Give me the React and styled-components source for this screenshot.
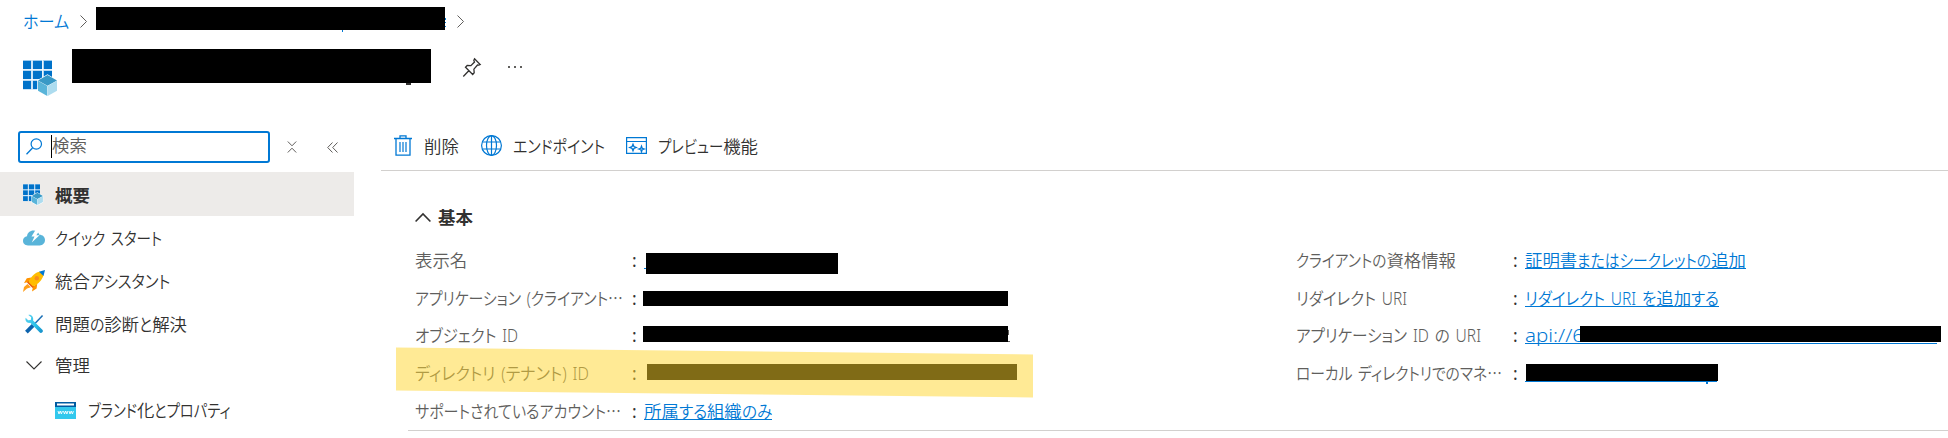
import React, { useLayoutEffect, useRef } from "react";
import styled, { createGlobalStyle, css } from "styled-components";

const Global = createGlobalStyle`
  *{box-sizing:border-box}
  body{margin:0;background:#fff;overflow:hidden}
`;

const Page = styled.div`
  width: 1948px;
  height: 438px;
  overflow: hidden;
  background: #fff;
  color: #323130;
  font-family: "Noto Sans", "Noto Sans CJK JP", sans-serif;
  font-size: 17.4px;
  line-height: 24px;
`;

/* Text whose kana and Latin runs are condensed to a given total width */
const Line = styled.span`
  display: inline-flex;
  white-space: pre;
  flex: none;
  height: 24px;
  font-family: "Noto Sans", "Noto Sans CJK JP", sans-serif;
  font-feature-settings: "palt";
  font-weight: ${(p) => (p.$bold ? 700 : 350)};
  word-spacing: 2px;
`;
const Run = styled.span`
  display: block;
  transform-origin: 0 50%;
`;
const Ellipsis = styled.span`
  font-family: "Noto Sans CJK JP", sans-serif;
  font-feature-settings: normal;
`;
function Label({ text, width, bold }) {
  const ref = useRef(null);
  useLayoutEffect(() => {
    const fit = () => {
      const runs = [...ref.current.children];
      runs.forEach((r) => {
        r.style.width = "auto";
        r.style.transform = "none";
      });
      let fixed = 0;
      let flexible = 0;
      const sizes = runs.map((r) => {
        const w = r.getBoundingClientRect().width;
        if (r.dataset.fixed) fixed += w;
        else flexible += w;
        return w;
      });
      if (!flexible) return;
      const scale = (width - fixed) / flexible;
      runs.forEach((r, i) => {
        if (r.dataset.fixed) return;
        r.style.width = `${sizes[i] * scale}px`;
        r.style.transform = `scaleX(${scale})`;
      });
    };
    fit();
    document.fonts?.ready.then(() => ref.current && fit());
  }, [text, width]);
  const parts = text.match(/[\u4e00-\u9fff]+|[^\u4e00-\u9fff]+/g);
  return (
    <Line ref={ref} $bold={bold}>
      {parts.map((t, i) => (
        <Run key={i} data-fixed={/[\u4e00-\u9fff]/.test(t) ? "1" : undefined}>
          {t.endsWith("…") ? <>{t.slice(0, -1)}<Ellipsis lang="ja">…</Ellipsis></> : t}
        </Run>
      ))}
    </Line>
  );
}

const Icon = styled.svg`
  display: block;
  flex: none;
  width: ${(p) => p.$w}px;
  height: ${(p) => p.$h}px;
  margin-left: ${(p) => p.$ml || 0}px;
  margin-top: ${(p) => p.$mt || 0}px;
  overflow: visible;
  fill: none;
`;

const Redaction = styled.span`
  position: relative;
  display: block;
  flex: none;
  width: ${(p) => p.$w}px;
  height: ${(p) => p.$h}px;
  margin-left: ${(p) => p.$ml || 0}px;
  margin-top: ${(p) => p.$mt || 0}px;
  background: #000;
`;
const Peek = styled.i`
  position: absolute;
  left: ${(p) => p.$x}px;
  top: ${(p) => p.$y}px;
  width: ${(p) => p.$w}px;
  height: ${(p) => p.$h}px;
  background: ${(p) => p.$c || "#0078d4"};
`;

const Breadcrumb = styled.nav`
  display: flex;
  align-items: flex-start;
  height: 49px;
  padding: 7px 0 0 23px;
  color: #0078d4;
`;
const Crumb = styled.span`
  display: flex;
  width: 57px;
  margin-top: 2px;
`;
const TitleBar = styled.header`
  display: flex;
  align-items: flex-start;
  height: 82px;
  padding-left: 23px;
`;
const Body = styled.div`
  display: flex;
  height: 307px;
`;
const Sidebar = styled.aside`
  width: 381px;
  flex: none;
`;
const SearchRow = styled.div`
  display: flex;
  align-items: flex-start;
  height: 41px;
  padding-left: 18px;
`;
const SearchBox = styled.div`
  display: flex;
  width: 252px;
  height: 32px;
  border: 2px solid #0078d4;
  border-radius: 3px;
  color: #605e5c;
  padding-left: 6px;
`;
const Caret = styled.span`
  width: 1px;
  height: 23px;
  margin: 2px 0 0 9px;
  background: #000;
`;
const SearchText = styled.span`
  display: flex;
`;
const NavItem = styled.div`
  display: flex;
  align-items: center;
  width: 354px;
  height: ${(p) => p.$h || 44}px;
  padding-left: ${(p) => (p.$sub ? 55 : 22)}px;
  ${(p) => p.$active && css`
    padding-top: 1px;
    background: #edebe9;
  `}
`;
const IconSlot = styled.span`
  width: ${(p) => p.$w || 33}px;
  flex: none;
`;
const Main = styled.main`
  width: 1567px;
`;
const Toolbar = styled.div`
  display: flex;
  align-items: center;
  height: 40px;
  padding: 0 0 10px 13px;
  border-bottom: 1px solid #d2d0ce;
`;
const Command = styled.span`
  display: flex;
  align-items: center;
  flex: none;
  width: ${(p) => p.$w}px;
`;
const CommandIcon = styled.span`
  width: ${(p) => p.$w}px;
  flex: none;
`;
const SectionTitle = styled.div`
  display: flex;
  align-items: center;
  height: 24px;
  margin: 34px 0 13px 34px;
`;
const Essentials = styled.section`
  position: relative;
  display: flex;
  height: 189px;
  margin-left: 27px;
  padding-left: 7px;
  border-bottom: 1px solid #d2d0ce;
`;
const Column = styled.div`
  width: 881px;
  flex: none;
`;
const Property = styled.div`
  display: flex;
  align-items: flex-start;
  height: 37.7px;
  padding-top: 6px;
`;
const Name = styled.span`
  display: flex;
  width: 217px;
  flex: none;
  color: #605e5c;
`;
const Colon = styled.span`
  width: 12px;
  flex: none;
`;
const Link = styled.a`
  position: relative;
  display: flex;
  height: 21px;
  color: #0078d4;
  border-bottom: 1px solid #0078d4;
  width: ${(p) => (p.$w ? `${p.$w}px` : "auto")};
`;
const Marker = styled.div`
  position: absolute;
  left: -12px;
  top: 109px;
  width: 637px;
  height: 42.5px;
  background: rgba(255, 214, 44, 0.5);
  transform: skewY(0.63deg);
`;

const Chevron = ({ ml }) => (
  <Icon $w={7} $h={13} $ml={ml} $mt={8} viewBox="0 0 7 13">
    <path d="M.5.5 6.5 6.5.5 12.5" stroke="#605e5c" />
  </Icon>
);

const AppIcon = ({ w, h, mt }) => (
  <Icon $w={w} $h={h} $mt={mt} viewBox="0 0 34 36">
    <path fill="#9ccbee" d="M0 0h29v29.500H0z" />
    <path fill="#fff" d="M8.500 0h1v29.500h-1zM19.200 0h1v29.500h-1zM0 9.300h29v1H0zM0 19.200h29v1H0z" />
    <path fill="#0072c9" d="M0 1h8v8H0zM10 1h9v8h-9zM21 1h8v8h-8zM0 11h8v8H0zM10 11h9v8h-9zM21 11h8v8h-8zM0 21h8v8H0zM10 21h9v8h-9z" />
    <path fill="#fff" d="M14.200 20.200 24.500 14.200 34.500 20.200v11.300L24.500 37 14.200 31.500z" />
    <path fill="#3999c6" d="m15 20.500 9.500-5.500 9.500 5.500-9.500 5.300z" />
    <path fill="#59b4d9" d="m15 20.800 9.300 5.300V36L15 30.800z" />
    <path fill="#addcef" d="m34 20.800-9.300 5.300V36l9.300-5.200z" />
  </Icon>
);

const QuickIcon = () => (
  <Icon $w={22} $h={16} viewBox="0 0 22 16" $ml={1}>
    <path fill="#59b4d9" d="M5 15.500C2 15.500 0 13.500 0 10.800c0-2.500 1.700-4.200 4-4.500C4.400 2.700 7 .5 10.500.5c2.700 0 5 1.500 5.900 4.200 3.200 0 5.600 2.200 5.600 5.400 0 3.100-2.200 5.400-5.300 5.400z" />
    <path fill="#fff" d="m12.500 0-4 6.500h3L8.800 12.500l7.700-7.200h-3.200L17 0z" />
  </Icon>
);

const RocketIcon = () => (
  <Icon $w={22} $h={22} viewBox="0 0 22 22" $ml={1}>
    <path fill="#ff9300" d="M8.500 7.500 3.800 8.200 1 13l5-1zM14.300 13.500l-.7 5L9 21.500l1-5z" />
    <path fill="#e8590c" d="m5.500 11 5.500 5.500-1.500 1.500L4 12.500z" />
    <path fill="#ffbd00" d="M5.500 12C8 6 13 2.200 17 1.500L20.500 5C19.500 9.500 15.500 14 10 16.500z" />
    <path fill="#0078d4" d="m16 1.700 6-1.700-1.500 6z" />
    <circle cx="13.800" cy="8.200" r="2.200" fill="#f78d1e" />
    <path fill="#ff9f1a" d="M4.500 14 7.800 17.200 4 18.500 0 22l1-5z" />
  </Icon>
);

const ToolsIcon = () => (
  <Icon $w={19} $h={20} $ml={3} viewBox="0 0 20 20">
    <defs>
      <linearGradient id="wrench" x1="0" y1="0" x2="1" y2="1">
        <stop offset="0" stopColor="#5fd3f0" />
        <stop offset=".6" stopColor="#28c0e8" />
        <stop offset="1" stopColor="#168bc7" />
      </linearGradient>
    </defs>
    <path d="m18.500 1-9 9.500" stroke="#1b6fb5" strokeWidth="1.600" />
    <path d="m8.500 11.500-7 7" stroke="#0c63ad" strokeWidth="4" />
    <path fill="url(#wrench)" d="M3.500.4 6.500 3l-.4 2.700-2.800.4L.7 3.500C-.3 6.500 2 9.500 5.600 8.800l9.700 10c1.700 1.700 4.700-.8 3-2.800L8.500 6.200C9.300 2.800 6.800-.4 3.500.4z" />
  </Icon>
);

const WebIcon = () => (
  <Icon $w={21} $h={17} viewBox="0 0 21 17">
    <path fill="#32c8ed" d="M0 5h21v12H0z" />
    <path fill="#005ba1" d="M0 0h21v5H0z" />
    <path fill="#fff" d="M2 1.500h17v2H2z" />
    <path d="m3 9 1 3 1.200-3 1.200 3 1-3M8.500 9l1 3 1.200-3 1.200 3 1-3M14 9l1 3 1.200-3 1.200 3 1-3" stroke="#fff" strokeWidth=".9" />
  </Icon>
);

function SideNav() {
  return (
    <Sidebar>
      <SearchRow>
        <SearchBox>
          <Icon $w={16} $h={17} $mt={5} viewBox="0 0 16 17">
            <circle cx="10.300" cy="6" r="5.200" stroke="#0078d4" strokeWidth="1.200" />
            <path d="M6.500 10 .5 16.200" stroke="#0078d4" strokeWidth="1.300" />
          </Icon>
          <Caret />
          <SearchText><Label text="検索" /></SearchText>
        </SearchBox>
        <Icon $w={10} $h={12} $ml={17} $mt={10} viewBox="0 0 10 12">
          <path d="m.8.500 4.200 4.300L9.200.5M.8 11.500 5 7.200l4.200 4.300" stroke="#605e5c" />
        </Icon>
        <Icon $w={11} $h={11} $ml={30} $mt={11} viewBox="0 0 11 11">
          <path d="M5.500.5.700 5.500l4.800 5M10.500.5l-4.800 5 4.800 5" stroke="#605e5c" />
        </Icon>
      </SearchRow>
      <NavItem $active>
        <IconSlot><Icon as="span" $ml={1}><AppIcon w={20} h={21} mt={0} /></Icon></IconSlot>
        <Label text="概要" bold />
      </NavItem>
      <NavItem>
        <IconSlot><QuickIcon /></IconSlot>
        <Label text="クイック スタート" width={107} />
      </NavItem>
      <NavItem $h={42}>
        <IconSlot><RocketIcon /></IconSlot>
        <Label text="統合アシスタント" width={115} />
      </NavItem>
      <NavItem $h={43}>
        <IconSlot><ToolsIcon /></IconSlot>
        <Label text="問題の診断と解決" width={132} />
      </NavItem>
      <NavItem $h={40}>
        <IconSlot>
          <Icon $w={16} $h={9} $ml={4} viewBox="0 0 16 9">
            <path d="m.5.500 7.500 7.500L15.500.5" stroke="#323130" strokeWidth="1.100" />
          </Icon>
        </IconSlot>
        <Label text="管理" />
      </NavItem>
      <NavItem $sub $h={50}>
        <IconSlot $w={33}><WebIcon /></IconSlot>
        <Label text="ブランド化とプロパティ" width={143} />
      </NavItem>
    </Sidebar>
  );
}

const Field = ({ name, width, children }) => (
  <Property>
    <Name><Label text={name} width={width} /></Name>
    <Colon>:</Colon>
    {children}
  </Property>
);

export default function App() {
  return (
    <Page>
      <Global />
      <Breadcrumb>
        <Crumb><Label text="ホーム" width={46} /></Crumb>
        <Chevron />
        <Redaction $w={349} $h={23} $ml={9}>
          <Peek $x={246} $y={23} $w={1} $h={2} />
          <Peek $x={349} $y={11} $w={1} $h={2} />
          <Peek $x={349} $y={15} $w={1} $h={1} />
          <Peek $x={349} $y={19} $w={1} $h={1} />
        </Redaction>
        <Chevron ml={12} />
      </Breadcrumb>
      <TitleBar>
        <AppIcon w={34} h={36} mt={11} />
        <Redaction $w={359} $h={34} $ml={15}>
          <Peek $x={334} $y={34} $w={5} $h={2} $c="#323130" />
        </Redaction>
        <Icon $w={18} $h={19} $ml={32} $mt={9} viewBox="0 0 18 19">
          <path d="m11.500.8 5.700 5.700-1.400.7-1.300-.2-3.600 4.200.3 3.600-1.500 1.700-7.200-7.300L4.200 7.500l3.700.2L11.500 4 10.800 2.500zM6 12.500.3 18.500" stroke="#323130" strokeWidth="1.300" />
        </Icon>
        <Icon $w={15} $h={3} $ml={27} $mt={17} viewBox="0 0 15 3">
          <path d="M0 0h2v2H0zM6 0h2v2H6zM12 0h2v2h-2z" fill="#605e5c" />
        </Icon>
      </TitleBar>
      <Body>
        <SideNav />
        <Main>
          <Toolbar>
            <Command $w={87}>
              <CommandIcon $w={30}>
                <Icon $w={18} $h={21} viewBox="0 0 18 21">
                  <path d="M0 3.500h18M6 3V.8h6V3M2 3.500v16.700h14V3.500" stroke="#0078d4" strokeWidth="1.300" />
                  <path d="M6 7v10M9 7v10M12 7v10" stroke="#0078d4" strokeWidth="1.200" />
                </Icon>
              </CommandIcon>
              <Label text="削除" />
            </Command>
            <Command $w={145}>
              <CommandIcon $w={32}>
                <Icon $w={21} $h={21} viewBox="0 0 21 21">
                  <g stroke="#0078d4" strokeWidth="1.200">
                    <circle cx="10.500" cy="10.500" r="9.900" />
                    <ellipse cx="10.500" cy="10.500" rx="5" ry="9.900" />
                    <path d="M10.500.5v20M1.500 7h18M1.500 14h18" />
                  </g>
                </Icon>
              </CommandIcon>
              <Label text="エンドポイント" width={92} />
            </Command>
            <Command $w={140}>
              <CommandIcon $w={32}>
                <Icon $w={21} $h={17} viewBox="0 0 21 17">
                  <path d="M.6.600h19.800v15.800H.6zM.6 4.500h19.800" stroke="#0078d4" strokeWidth="1.200" />
                  <path d="m7 7.300.9 2.300 2.300.9-2.300.9L7 13.700l-.9-2.300-2.300-.9 2.300-.9zM15.500 9.300l.7 2 2 .7-2 .7-.7 2-.7-2-2-.7 2-.7z" stroke="#0078d4" strokeWidth="1.300" />
                </Icon>
              </CommandIcon>
              <Label text="プレビュー機能" width={100} />
            </Command>
          </Toolbar>
          <SectionTitle>
            <CommandIcon $w={23}>
              <Icon $w={16} $h={9} viewBox="0 0 16 9">
                <path d="M.6 8.500 8 1l7.400 7.500" stroke="#323130" strokeWidth="1.600" />
              </Icon>
            </CommandIcon>
            <Label text="基本" bold />
          </SectionTitle>
          <Essentials>
            <Column>
              <Field name="表示名">
                <Link $w={2}><Redaction $w={192} $h={21} $ml={2} $mt={5} /></Link>
              </Field>
              <Field name="アプリケーション (クライアント…" width={208}>
                <Redaction $w={365} $h={15} $ml={-1} $mt={5} />
              </Field>
              <Field name="オブジェクト ID" width={103}>
                <Redaction $w={365} $h={16} $ml={-1} $mt={3}>
                  <Peek $x={365} $y={4} $w={1} $h={5} $c="#605e5c" />
                  <Peek $x={365} $y={15} $w={2} $h={1} $c="#605e5c" />
                </Redaction>
              </Field>
              <Field name="ディレクトリ (テナント) ID" width={174}>
                <Redaction $w={370} $h={16} $ml={3} $mt={3} />
              </Field>
              <Field name="サポートされているアカウント…" width={206}>
                <Link><Label text="所属する組織のみ" width={128} /></Link>
              </Field>
            </Column>
            <Column>
              <Field name="クライアントの資格情報" width={160}>
                <Link><Label text="証明書またはシークレットの追加" width={221} /></Link>
              </Field>
              <Field name="リダイレクト URI" width={111}>
                <Link><Label text="リダイレクト URI を追加する" width={194} /></Link>
              </Field>
              <Field name="アプリケーション ID の URI" width={185}>
                <Link $w={412}>
                  <Label text="api://6" width={59} />
                  <Redaction $w={361} $h={16} $ml={-4} $mt={3} />
                </Link>
              </Field>
              <Field name="ローカル ディレクトリでのマネ…" width={206}>
                <Link $w={192}>
                  <Redaction $w={192} $h={17} $ml={1} $mt={3}>
                    <Peek $x={180} $y={17} $w={2} $h={3} />
                  </Redaction>
                </Link>
              </Field>
            </Column>
            <Marker />
          </Essentials>
        </Main>
      </Body>
    </Page>
  );
}
